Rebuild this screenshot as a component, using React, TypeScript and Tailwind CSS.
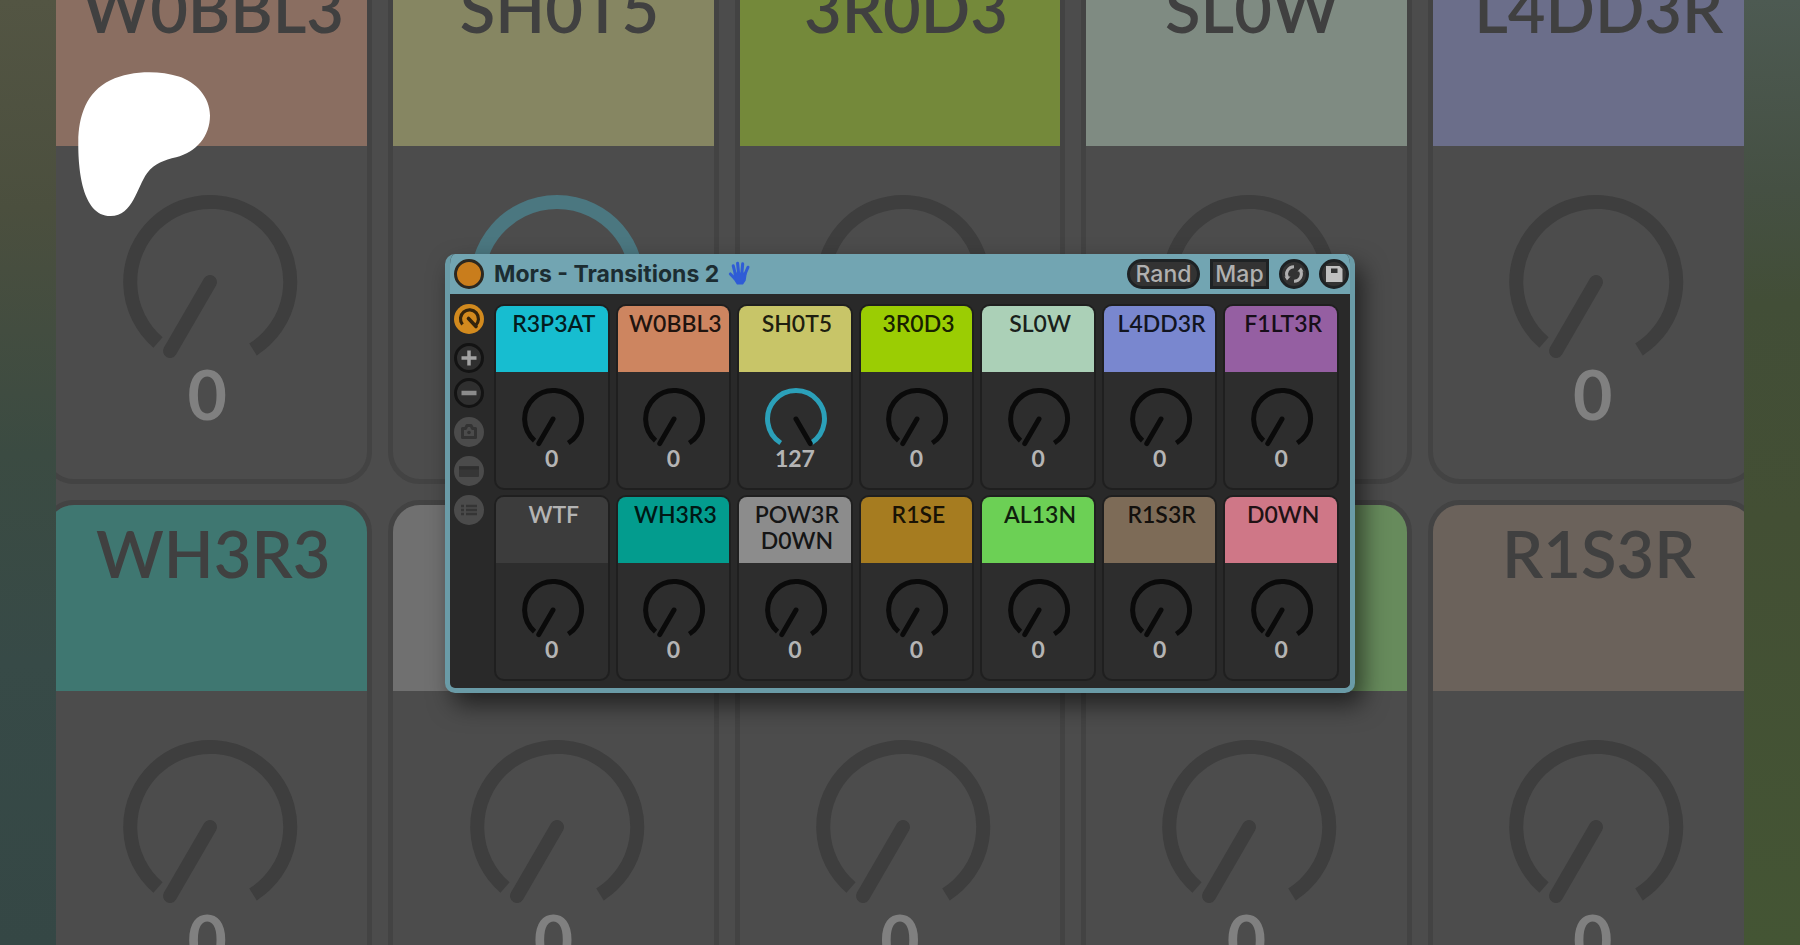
import React from "react";

type Pad = { name: string; color: string; value?: number; light?: boolean };

const pads: Pad[] = [
  { name: "R3P3AT", color: "bg-[#17bdd0]" },
  { name: "W0BBL3", color: "bg-[#cd8560]" },
  { name: "SH0T5", color: "bg-[#c8c568]", value: 127 },
  { name: "3R0D3", color: "bg-[#9bcd03]" },
  { name: "SL0W", color: "bg-[#abd0b7]" },
  { name: "L4DD3R", color: "bg-[#7987cf]" },
  { name: "F1LT3R", color: "bg-[#955fa2]" },
  { name: "WTF", color: "bg-[#3c3c3c]", light: true },
  { name: "WH3R3", color: "bg-[#039c8e]" },
  { name: "POW3R D0WN", color: "bg-[#8c8c8c]" },
  { name: "R1SE", color: "bg-[#a67c20]" },
  { name: "AL13N", color: "bg-[#6cd055]" },
  { name: "R1S3R", color: "bg-[#7d6b57]" },
  { name: "D0WN", color: "bg-[#cf7787]" },
];

const backdrop: Pad[] = [
  { name: "W0BBL3", color: "bg-[#8a6e61]" },
  { name: "SH0T5", color: "bg-[#868662]", value: 127 },
  { name: "3R0D3", color: "bg-[#74893a]" },
  { name: "SL0W", color: "bg-[#7f8b82]" },
  { name: "L4DD3R", color: "bg-[#6b6e8a]" },
  { name: "WH3R3", color: "bg-[#3f7771]" },
  { name: "", color: "bg-[#707070]" },
  { name: "", color: "bg-[#7a6a45]" },
  { name: "", color: "bg-[#678b5c]" },
  { name: "R1S3R", color: "bg-[#6b625b]" },
];

function Knob({ full, className, ring, needle }: { full: boolean; className: string; ring: string; needle: string }) {
  return (
    <svg viewBox="0 0 180 180" className={className} fill="none" strokeWidth="14" aria-hidden="true">
      <path d={full ? "M47 157.500A80 80 0 1 1 133 157.500" : "M38 150.500A80 80 0 1 1 133 157.500"} className={ring} />
      <path d={full ? "M90 90L130 159" : "M90 90L50 159"} className={needle} strokeLinecap="round" />
    </svg>
  );
}

function BackdropCard({ pad }: { pad: Pad }) {
  const full = pad.value === 127;
  return (
    <div className="flex h-[529px] flex-col items-center overflow-hidden rounded-[32px] border-[5px] border-[#434343] bg-[#4c4c4c]">
      <div className={`h-[186px] w-full shrink-0 pt-2 pl-3 text-center text-[65px] leading-[80px] font-semibold whitespace-nowrap text-[#404040] ${pad.color}`}>
        {pad.name}
      </div>
      <Knob full={full} className="mt-[46px] ml-[6px] size-[180px] shrink-0" ring={full ? "stroke-[#4b7780]" : "stroke-[#3e3e3e]"} needle="stroke-[#3e3e3e]" />
      <div className="-mt-[18px] text-[68px] leading-[80px] font-bold text-[#808080]">{pad.value ?? 0}</div>
    </div>
  );
}

function DeviceCard({ pad }: { pad: Pad }) {
  const full = pad.value === 127;
  return (
    <div className="flex h-[186px] flex-col items-center overflow-hidden rounded-[10px] border-2 border-[#1f1f1f] bg-[#2d2d2d]">
      <div className={`h-[66px] w-full shrink-0 pt-1 pr-1 pl-2 text-center text-[23px] leading-[26px] font-semibold ${pad.light ? "text-[#b4b4b4]" : "text-black/85"} ${pad.color}`}>
        {pad.name}
      </div>
      <Knob full={full} className="mt-[15px] ml-[2px] size-16 shrink-0" ring={full ? "stroke-[#2ba0b9]" : "stroke-[#0a0a0a]"} needle="stroke-[#0a0a0a]" />
      <div className="-mt-[6px] text-[23px] leading-[26px] font-bold text-[#b4b4b4]">{pad.value ?? 0}</div>
    </div>
  );
}

function RoundButton({ label, tone, children }: { label: string; tone: string; children?: React.ReactNode }) {
  return (
    <button type="button" aria-label={label} className={`flex size-[30px] shrink-0 items-center justify-center rounded-full ${tone}`}>
      {children}
    </button>
  );
}

function HandIcon() {
  return (
    <svg viewBox="0 0 24 26" className="size-[25px]" fill="none" stroke="#2f5cd6" strokeLinecap="round" strokeWidth="3.200" aria-hidden="true">
      <path d="M7.500 13L5.500 5M11 12L10 2.500M14.500 12L15.300 3M18 13L20.800 6.500M7 18L2.500 13.500" />
      <path d="M7 13H18.500L17.500 20L15 23.500H10L7 19Z" fill="#2f5cd6" strokeWidth="2" strokeLinejoin="round" />
    </svg>
  );
}

function SideBar() {
  return (
    <div className="flex w-11 shrink-0 flex-col gap-[9px] pl-1">
      <RoundButton label="Macro controls" tone="bg-[#d28a1e]">
        <svg viewBox="0 0 30 30" className="size-[30px]" fill="none" stroke="#33240c" aria-hidden="true">
          <path d="M8.500 20.500A9 9 0 1 1 21.500 21.500" strokeWidth="3.200" />
          <path d="M14.500 14.500L22 22.500" strokeWidth="3.600" strokeLinecap="round" />
        </svg>
      </RoundButton>
      <div className="flex flex-col gap-[5px]">
        <RoundButton label="Add macro" tone="border-[3px] border-[#131313] bg-[#2f2f2f]">
          <svg viewBox="0 0 24 24" className="size-6" stroke="#a2a2a2" strokeWidth="3.500" aria-hidden="true">
            <path d="M12 4.500V19.500M4.500 12H19.500" />
          </svg>
        </RoundButton>
        <RoundButton label="Remove macro" tone="border-[3px] border-[#131313] bg-[#2f2f2f]">
          <svg viewBox="0 0 24 24" className="size-6" stroke="#8c8c8c" strokeWidth="4.500" aria-hidden="true">
            <path d="M4.500 12H19.500" />
          </svg>
        </RoundButton>
      </div>
      <RoundButton label="Snapshots" tone="bg-[#4b4b4b]">
        <svg viewBox="0 0 30 30" className="size-[30px]" fill="none" stroke="#333333" strokeWidth="3" aria-hidden="true">
          <path d="M8.500 11.500H11.500L13 8.500H17L18.500 11.500H21.500V20.500H8.500Z" strokeLinejoin="round" />
          <circle cx="15" cy="15.500" r="1.800" fill="#333333" stroke="none" />
        </svg>
      </RoundButton>
      <RoundButton label="Chain view" tone="bg-[#4b4b4b]">
        <svg viewBox="0 0 30 30" className="size-[30px]" aria-hidden="true">
          <rect x="5" y="10" width="20" height="11" rx="1" fill="#363636" />
          <path d="M5 12H25" stroke="#2f2f2f" strokeWidth="3" />
        </svg>
      </RoundButton>
      <RoundButton label="Chain list" tone="bg-[#4b4b4b]">
        <svg viewBox="0 0 30 30" className="size-[30px]" stroke="#353535" strokeWidth="2.500" aria-hidden="true">
          <path d="M7 11H10M12 11H23M7 15H10M12 15H23M7 19H10M12 19H23" />
        </svg>
      </RoundButton>
    </div>
  );
}

function Device() {
  return (
    <section className="overflow-hidden rounded-[10px] border-[5px] border-t-0 border-[#6a9ba7] bg-[#292929] shadow-[8px_12px_24px_rgba(0,0,0,0.55)]">
      <header className="flex h-10 items-center bg-[#72a5b2] pl-1 font-['Inter',sans-serif] text-[23px]">
        <RoundButton label="Device on" tone="border-[3px] border-[#2c2820] bg-[#c97d1c]" />
        <h1 className="ml-[10px] pt-0.5 font-bold text-[#1c2d32]">Mors - Transitions 2</h1>
        <span className="ml-2"><HandIcon /></span>
        <div className="ml-auto flex items-center gap-[10px] pr-px font-medium text-[#b0b0b0]">
          <button type="button" className="h-[30px] w-[73px] rounded-full border-[3px] border-[#1e2224] bg-[#333333] leading-6">Rand</button>
          <button type="button" className="h-[30px] w-[59px] border-[3px] border-[#1e2224] bg-[#333333] leading-6">Map</button>
          <RoundButton label="Swap" tone="border-[3px] border-[#1e2224] bg-[#333333]">
            <svg viewBox="0 0 24 24" className="size-6" fill="none" stroke="#b0b0b0" strokeWidth="3" aria-hidden="true">
              <path d="M5.500 15.500A7.300 7.300 0 0 1 12 4.700M18.500 8.500A7.300 7.300 0 0 1 12 19.300" />
              <path d="M2.500 14.500H8.500L5 18.500ZM21.500 9.500H15.500L19 5.500Z" fill="#b0b0b0" stroke="none" />
            </svg>
          </RoundButton>
          <RoundButton label="Save preset" tone="border-[3px] border-[#1e2224] bg-[#333333]">
            <svg viewBox="0 0 24 24" className="size-6" aria-hidden="true">
              <path d="M4 4H17.500L20.500 7V20H4Z" fill="#c0c0c0" />
              <path d="M9 6.500H15.500V11H9Z" fill="#333333" />
            </svg>
          </RoundButton>
        </div>
      </header>
      <div className="flex pt-[10px] pr-[11px] pb-[7px]">
        <SideBar />
        <div className="grid w-[845px] grid-cols-7 gap-x-[6px] gap-y-[5px]">
          {pads.map((pad) => <DeviceCard key={pad.name} pad={pad} />)}
        </div>
      </div>
    </section>
  );
}

export default function App() {
  return (
    <main className="relative flex h-screen overflow-hidden font-['Lato',sans-serif]">
      <div className="w-14 shrink-0 bg-[linear-gradient(to_bottom,#535543,#4b4f3e_22%,#3b4b42_48%,#374a47_70%,#354745)]" />
      <div className="min-w-0 flex-1 overflow-hidden bg-[#4c4c4c]">
        <div className="-mx-[14px] -mt-[45px] grid grid-cols-5 gap-4">
          {backdrop.map((pad, i) => <BackdropCard key={i} pad={pad} />)}
        </div>
      </div>
      <div className="w-14 shrink-0 bg-[linear-gradient(to_bottom,#4d5a52,#455043_20%,#424e37_32%,#434f34_55%,#445534)]" />
      <svg viewBox="0 0 132 144" className="absolute top-[72px] left-[78px] w-33" fill="#ffffff" role="img" aria-label="Patreon">
        <path d="M132 43.500C132 25.100 117.600 10 100.800 4.600C79.900-2.200 52.300-1.200 32.400 8.200C8.200 19.600.6 44.600.3 69.500C.1 90 2.100 144 32.600 144C55.300 144 58.700 115.100 69.200 101C76.700 91 86.300 88.100 98.100 85.200C118.400 80.200 132 64.200 132 43.500Z" />
      </svg>
      <div className="absolute inset-0 flex items-center justify-center pt-px">
        <Device />
      </div>
    </main>
  );
}
